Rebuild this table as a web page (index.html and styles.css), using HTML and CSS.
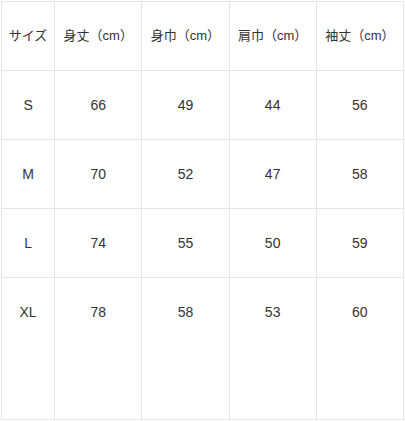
FILE: index.html
```html
<!DOCTYPE html>
<html lang="ja">
<head>
<meta charset="utf-8">
<link rel="stylesheet" href="styles.css">
</head>
<body>
<table class="size-table">
  <colgroup>
    <col class="c-size"><col class="c-val"><col class="c-val"><col class="c-val"><col class="c-val">
  </colgroup>
  <thead>
    <tr class="row">
      <th>サイズ</th><th>身丈（cm）</th><th>身巾（cm）</th><th>肩巾（cm）</th><th>袖丈（cm）</th>
    </tr>
  </thead>
  <tbody>
    <tr class="row"><td>S</td><td>66</td><td>49</td><td>44</td><td>56</td></tr>
    <tr class="row"><td>M</td><td>70</td><td>52</td><td>47</td><td>58</td></tr>
    <tr class="row"><td>L</td><td>74</td><td>55</td><td>50</td><td>59</td></tr>
    <tr class="row last"><td>XL</td><td>78</td><td>58</td><td>53</td><td>60</td></tr>
  </tbody>
</table>
</body>
</html>
```
FILE: styles.css
```css
html, body {
  margin: 0;
  padding: 0;
  background: #ffffff;
}
body {
  padding: 1px 0 0 1px;
  font-family: "Liberation Sans", "Noto Sans CJK JP", sans-serif;
  color: #333333;
}
.size-table {
  border-collapse: collapse;
  table-layout: fixed;
  width: 403px;
}
.c-size { width: 53px; }
.c-val { width: 87px; }
.size-table th,
.size-table td {
  border: 1px solid #e6e6e6;
  padding: 24px 0 0;
  vertical-align: top;
  text-align: center;
  line-height: 20px;
  white-space: nowrap;
}
.size-table th {
  font-weight: normal;
  font-size: 13px;
}
.size-table td {
  font-size: 14px;
}
.row { height: 69px; }
.row.last { height: 142px; }
```
